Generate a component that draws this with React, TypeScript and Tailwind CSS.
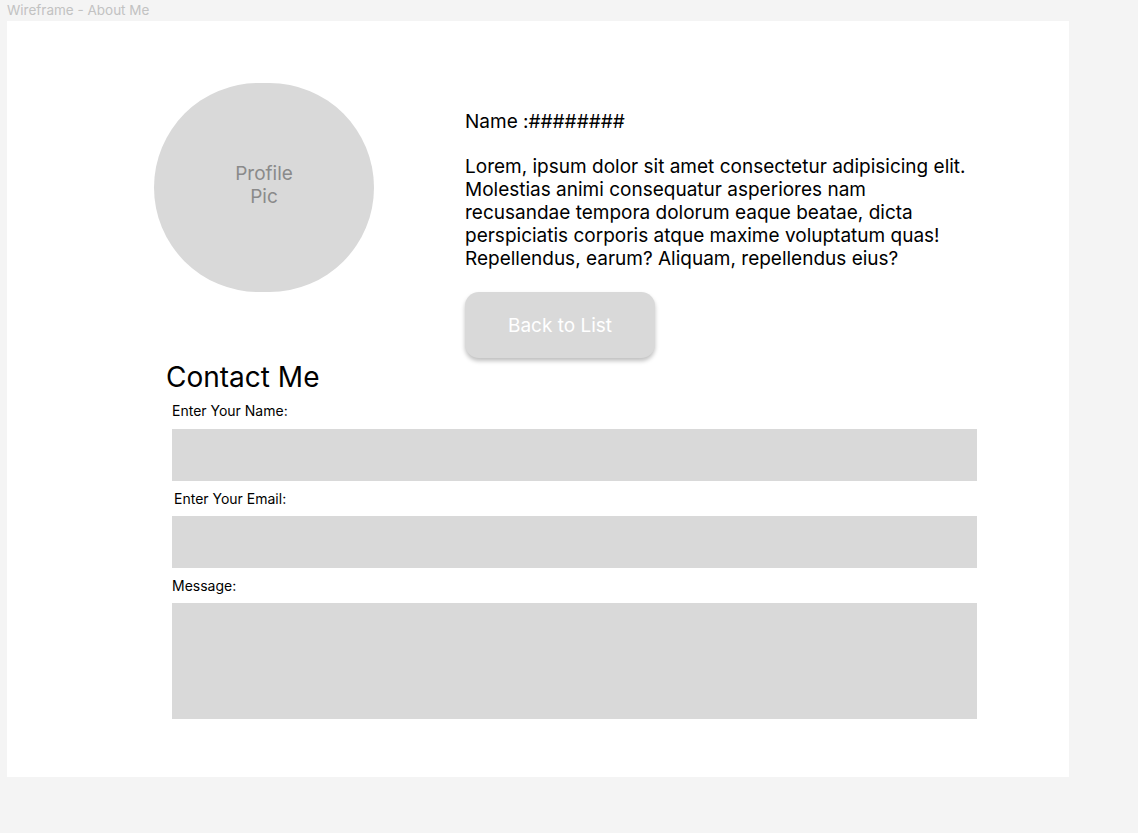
const fieldLabel = "block text-[14px] leading-[16px] text-black";

const App = (): JSX.Element => {
  return (
    <div className="min-h-[833px] bg-[#f4f4f4] font-['Inter','Liberation_Sans',sans-serif]">
      <div className="h-[21px] pl-[7px] text-[13.5px] leading-[21px] text-[#c2c2c2]">
        Wireframe - About Me
      </div>
      <div className="ml-[7px] w-[1062px] h-[756px] bg-white">
        <div className="flex pl-[147px] pt-[62px]">
          <div className="w-[220px] h-[209px] pb-[6px] rounded-full bg-[#d9d9d9] flex items-center justify-center text-center text-[19px] leading-[23px] text-[#8a8a8a]">
            Profile
            <br />
            Pic
          </div>
          <div className="ml-[91px] mt-[27px] w-[540px] text-[19px] leading-[23px] text-black">
            <p>Name :########</p>
            <p className="mt-[22px]">
              Lorem, ipsum dolor sit amet consectetur adipisicing elit.
              <br />
              Molestias animi consequatur asperiores nam
              <br />
              recusandae tempora dolorum eaque beatae, dicta
              <br />
              perspiciatis corporis atque maxime voluptatum quas!
              <br />
              Repellendus, earum? Aliquam, repellendus eius?
            </p>
            <button className="mt-[22px] w-[190px] h-[66px] rounded-[14px] bg-[#d9d9d9] text-white text-[19px] shadow-[0_3px_4px_rgba(0,0,0,0.25)]">
              Back to List
            </button>
          </div>
        </div>

        <div className="ml-[159px] mt-[2px]">
          <h2 className="text-[28px] leading-[34px] text-black">Contact Me</h2>
          <form className="ml-[6px] mt-[9px] w-[805px]">
            <label className={fieldLabel}>Enter Your Name:</label>
            <div className="mt-[10px] h-[52px] bg-[#d9d9d9]" />
            <label className={fieldLabel + " mt-[10px] pl-[2px]"}>Enter Your Email:</label>
            <div className="mt-[9px] h-[52px] bg-[#d9d9d9]" />
            <label className={fieldLabel + " mt-[10px]"}>Message:</label>
            <div className="mt-[9px] h-[116px] bg-[#d9d9d9]" />
          </form>
        </div>
      </div>
    </div>
  );
};

export default App;
